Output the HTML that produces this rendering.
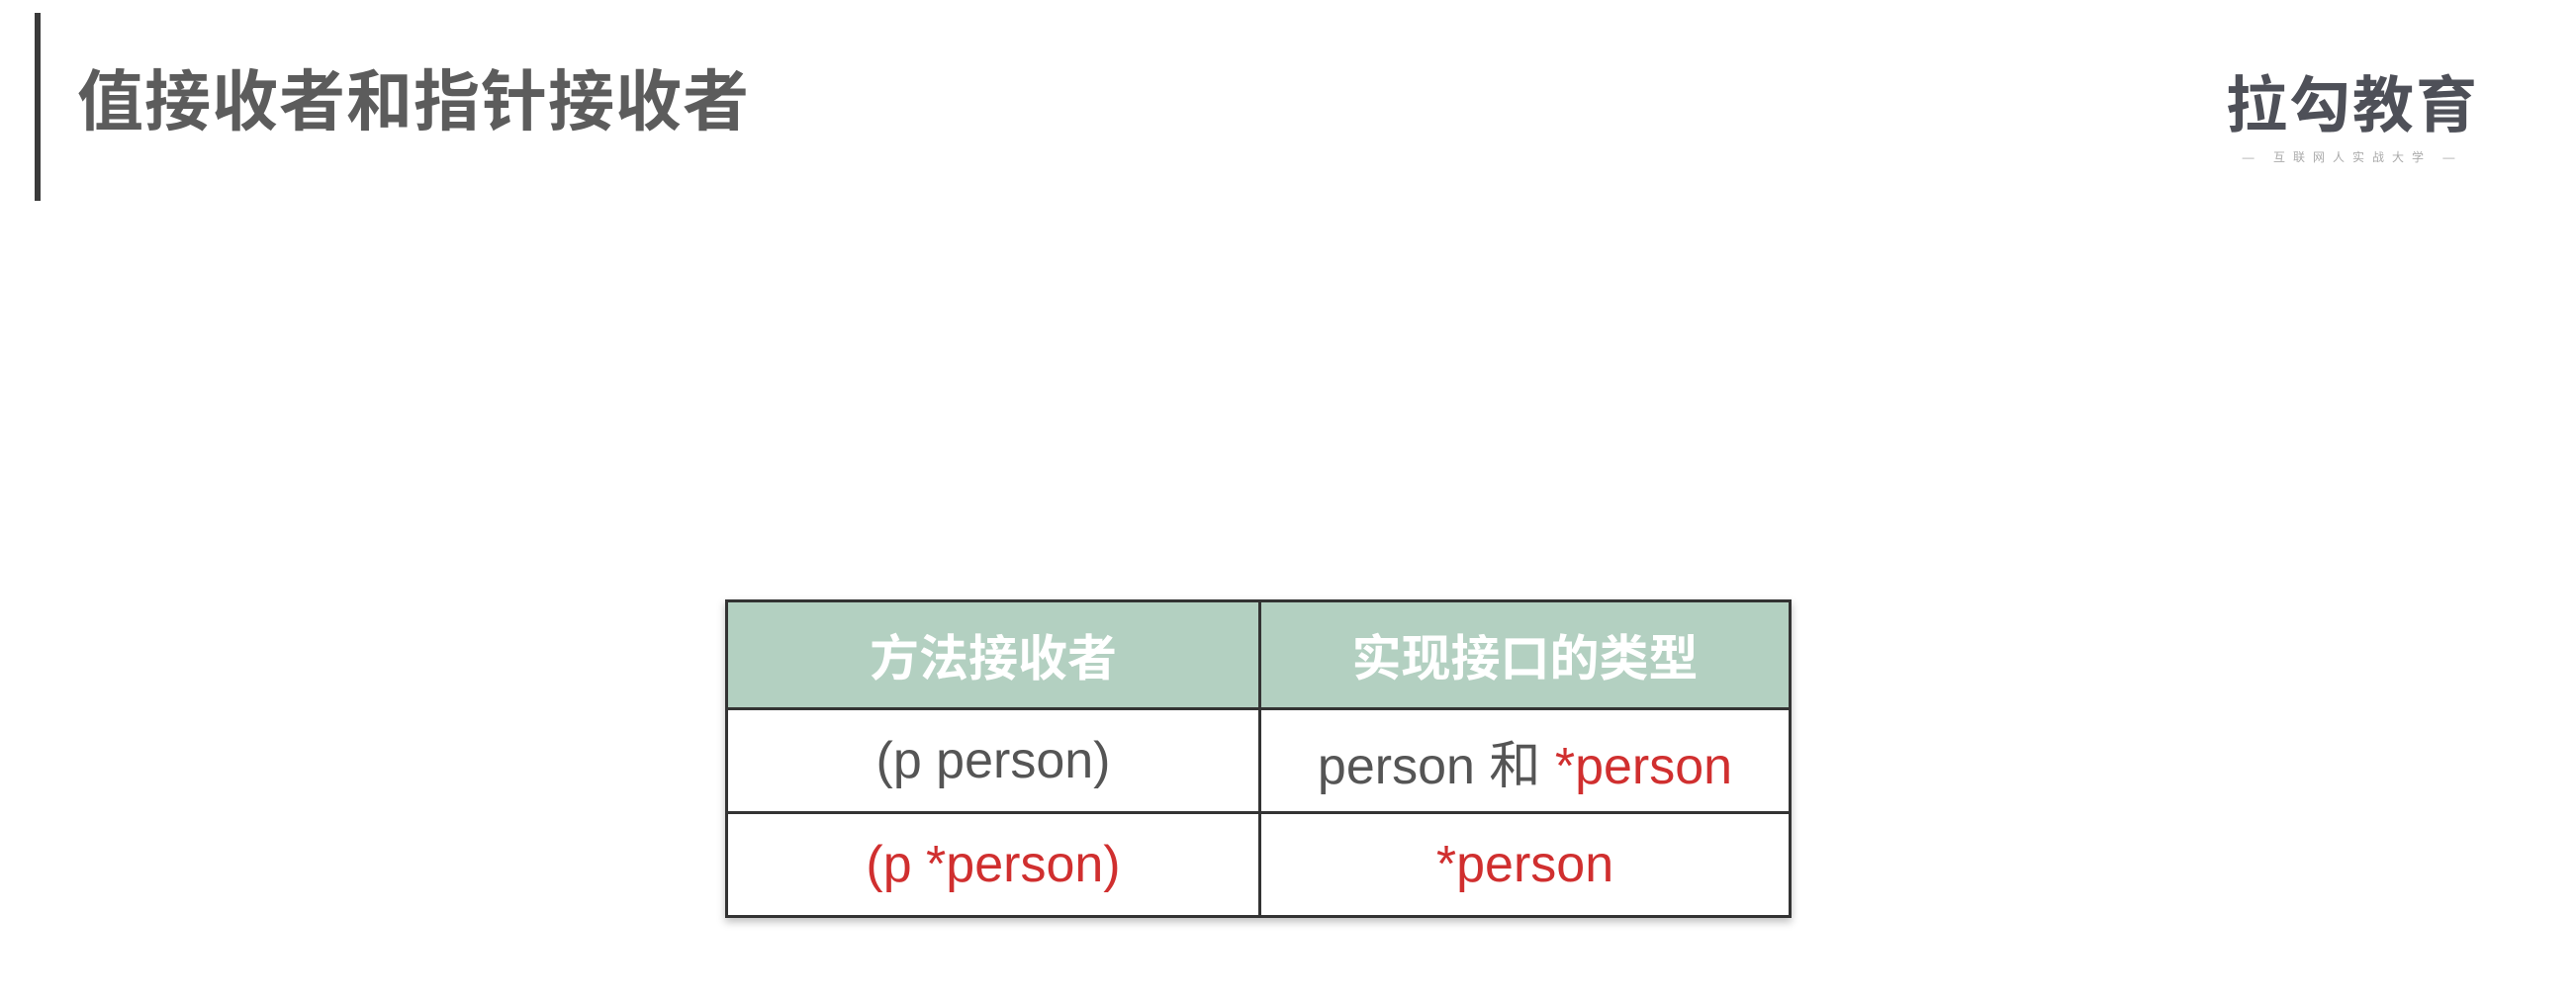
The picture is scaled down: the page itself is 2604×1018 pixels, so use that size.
<!DOCTYPE html>
<html><head><meta charset="utf-8"><style>
body{margin:0;width:2604px;height:1018px;background:#fff;position:relative;overflow:hidden;font-family:"Liberation Sans","Noto Sans CJK SC",sans-serif}
.bar{position:absolute;left:35px;top:13px;width:6px;height:190px;background:#3a3a3a}
.title{position:absolute;left:78px;top:64px;font-size:67px;font-weight:bold;color:#5c5c5c;line-height:80px;letter-spacing:1px;white-space:nowrap}
.logo{position:absolute;left:2250px;top:72px;font-size:62px;font-weight:bold;color:#4e5058;line-height:72px;letter-spacing:2px;white-space:nowrap}
.sub{position:absolute;left:2254px;top:150px;width:248px;font-size:12px;color:#aaa;text-align:center;letter-spacing:8px;white-space:nowrap}
table{position:absolute;left:733px;top:606px;width:1078px;height:322px;border-collapse:collapse;box-shadow:0 4px 8px rgba(0,0,0,.25)}
td,th{border:3px solid #333;text-align:center;font-size:52px;color:#555;padding:0}
th{background:#b3d0c1;color:#fff;font-weight:bold;height:106px;font-size:50px}
td{height:102px}
.r{color:#d02f2f}
</style></head><body>
<div class="bar"></div>
<div class="title">值接收者和指针接收者</div>
<div class="logo">拉勾教育</div>
<div class="sub">— 互联网人实战大学 —</div>
<table>
<tr><th style="width:536px">方法接收者</th><th>实现接口的类型</th></tr>
<tr><td>(p person)</td><td>person 和 <span class="r">*person</span></td></tr>
<tr><td class="r">(p *person)</td><td class="r">*person</td></tr>
</table>
</body></html>
